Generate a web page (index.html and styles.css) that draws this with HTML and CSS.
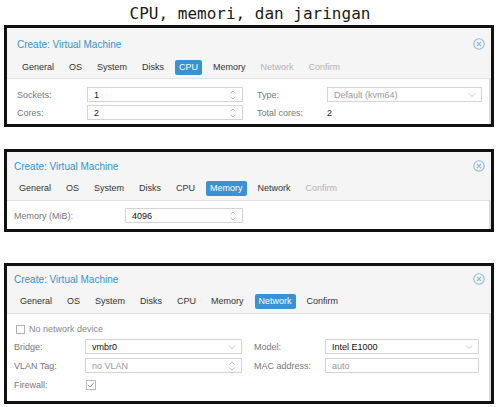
FILE: index.html
```html
<!DOCTYPE html>
<html lang="id">

<head>
    <meta charset="UTF-8">
    <meta name="viewport" content="width=device-width, initial-scale=1.0">
    <title>CPU, memori, dan jaringan</title>
    <link rel="stylesheet" href="styles.css">
</head>

<body>
    <h1 class="page-title">CPU, memori, dan jaringan</h1>

    <!-- CPU step -->
    <section class="wizard wizard-cpu">
        <header class="wizard-head">
            <div class="wizard-title-row">
                <span class="wizard-title">Create: Virtual Machine</span>
                <svg class="close-icon" viewBox="0 0 12 12" width="12" height="12">
                    <circle cx="6" cy="6" r="5.2" fill="none" stroke="#8cbbe4" stroke-width="1.1" />
                    <path d="M4 4 L8 8 M8 4 L4 8" stroke="#8cbbe4" stroke-width="1.1" />
                </svg>
            </div>
            <nav class="tabs">
                <span class="tab">General</span>
                <span class="tab">OS</span>
                <span class="tab">System</span>
                <span class="tab">Disks</span>
                <span class="tab active">CPU</span>
                <span class="tab">Memory</span>
                <span class="tab disabled">Network</span>
                <span class="tab disabled">Confirm</span>
            </nav>
        </header>
        <div class="wizard-body">
            <div class="form-grid">
                <div class="field">
                    <label>Sockets:</label>
                    <div class="input">1
                        <svg class="spin" viewBox="0 0 8 12" width="8" height="12">
                            <path d="M1.5 4.5 L4 2 L6.5 4.5 M1.5 7.5 L4 10 L6.5 7.5" fill="none" stroke="#b5b5b5" stroke-width="0.9" />
                        </svg>
                    </div>
                </div>
                <div class="field">
                    <label>Type:</label>
                    <div class="input muted">Default (kvm64)
                        <svg class="caret" viewBox="0 0 8 6" width="8" height="6">
                            <path d="M1 1.5 L4 4.5 L7 1.5" fill="none" stroke="#c0c0c0" stroke-width="0.9" />
                        </svg>
                    </div>
                </div>
                <div class="field">
                    <label>Cores:</label>
                    <div class="input">2
                        <svg class="spin" viewBox="0 0 8 12" width="8" height="12">
                            <path d="M1.5 4.5 L4 2 L6.5 4.5 M1.5 7.5 L4 10 L6.5 7.5" fill="none" stroke="#b5b5b5" stroke-width="0.9" />
                        </svg>
                    </div>
                </div>
                <div class="field">
                    <label>Total cores:</label>
                    <span class="value">2</span>
                </div>
            </div>
        </div>
    </section>

    <!-- Memory step -->
    <section class="wizard wizard-memory">
        <header class="wizard-head">
            <div class="wizard-title-row">
                <span class="wizard-title">Create: Virtual Machine</span>
                <svg class="close-icon" viewBox="0 0 12 12" width="12" height="12">
                    <circle cx="6" cy="6" r="5.2" fill="none" stroke="#8cbbe4" stroke-width="1.1" />
                    <path d="M4 4 L8 8 M8 4 L4 8" stroke="#8cbbe4" stroke-width="1.1" />
                </svg>
            </div>
            <nav class="tabs">
                <span class="tab">General</span>
                <span class="tab">OS</span>
                <span class="tab">System</span>
                <span class="tab">Disks</span>
                <span class="tab">CPU</span>
                <span class="tab active">Memory</span>
                <span class="tab">Network</span>
                <span class="tab disabled">Confirm</span>
            </nav>
        </header>
        <div class="wizard-body">
            <div class="field field-wide">
                <label>Memory (MiB):</label>
                <div class="input strong">4096
                    <svg class="spin" viewBox="0 0 8 12" width="8" height="12">
                        <path d="M1.5 4.5 L4 2 L6.5 4.5 M1.5 7.5 L4 10 L6.5 7.5" fill="none" stroke="#b5b5b5" stroke-width="0.9" />
                    </svg>
                </div>
            </div>
        </div>
    </section>

    <!-- Network step -->
    <section class="wizard wizard-network">
        <header class="wizard-head">
            <div class="wizard-title-row">
                <span class="wizard-title">Create: Virtual Machine</span>
                <svg class="close-icon" viewBox="0 0 12 12" width="12" height="12">
                    <circle cx="6" cy="6" r="5.2" fill="none" stroke="#8cbbe4" stroke-width="1.1" />
                    <path d="M4 4 L8 8 M8 4 L4 8" stroke="#8cbbe4" stroke-width="1.1" />
                </svg>
            </div>
            <nav class="tabs">
                <span class="tab">General</span>
                <span class="tab">OS</span>
                <span class="tab">System</span>
                <span class="tab">Disks</span>
                <span class="tab">CPU</span>
                <span class="tab">Memory</span>
                <span class="tab active">Network</span>
                <span class="tab">Confirm</span>
            </nav>
        </header>
        <div class="wizard-body">
            <div class="check-row">
                <span class="checkbox"></span>
                <span class="check-label">No network device</span>
            </div>
            <div class="form-grid">
                <div class="field">
                    <label>Bridge:</label>
                    <div class="input strong">vmbr0
                        <svg class="caret" viewBox="0 0 8 6" width="8" height="6">
                            <path d="M1 1.5 L4 4.5 L7 1.5" fill="none" stroke="#c0c0c0" stroke-width="0.9" />
                        </svg>
                    </div>
                </div>
                <div class="field">
                    <label>Model:</label>
                    <div class="input strong">Intel E1000
                        <svg class="caret" viewBox="0 0 8 6" width="8" height="6">
                            <path d="M1 1.5 L4 4.5 L7 1.5" fill="none" stroke="#c0c0c0" stroke-width="0.9" />
                        </svg>
                    </div>
                </div>
                <div class="field">
                    <label>VLAN Tag:</label>
                    <div class="input muted">no VLAN
                        <svg class="spin" viewBox="0 0 8 12" width="8" height="12">
                            <path d="M1.5 4.5 L4 2 L6.5 4.5 M1.5 7.5 L4 10 L6.5 7.5" fill="none" stroke="#b5b5b5" stroke-width="0.9" />
                        </svg>
                    </div>
                </div>
                <div class="field">
                    <label>MAC address:</label>
                    <div class="input muted">auto</div>
                </div>
                <div class="field">
                    <label>Firewall:</label>
                    <svg class="checked" viewBox="0 0 10 10" width="10" height="10">
                        <rect x="0.5" y="0.5" width="9" height="9" fill="#fff" stroke="#b8b8b8" />
                        <path d="M2.2 5 L4.2 7 L8 2.6" fill="none" stroke="#a0a0a0" stroke-width="1" />
                    </svg>
                </div>
            </div>
        </div>
    </section>
</body>

</html>
```

FILE: styles.css
```css
* {
    margin: 0;
    padding: 0;
    box-sizing: border-box;
}

body {
    width: 500px;
    height: 407px;
    overflow: hidden;
    background-color: #fff;
    font-family: 'Liberation Sans', Arial, sans-serif;
    font-size: 9px;
    color: #333;
}

.page-title {
    font-family: 'DejaVu Sans Mono', monospace;
    font-size: 16px;
    font-weight: normal;
    line-height: 20px;
    text-align: center;
    color: #1a1a1a;
    padding-top: 4px;
    height: 25px;
}

/* Wizard panel */
.wizard {
    margin: 0 6px 0 4px;
    border: 3px solid #111;
    background-color: #fff;
    box-shadow: inset -2px 0 0 #dcdcdc;
}

.wizard-memory {
    margin-top: 22px;
}

.wizard-network {
    margin-top: 31px;
}

.wizard-head {
    background-color: #f5f5f5;
    border-bottom: 1px solid #e2e2e2;
    padding: 9px 6px 3px 10px;
}

.wizard-title-row {
    display: flex;
    justify-content: space-between;
    align-items: center;
    height: 14px;
}

.wizard-title {
    font-size: 10px;
    color: #3892d4;
}

.tabs {
    display: flex;
    gap: 7px;
    margin-top: 9px;
    margin-left: 1px;
}

.tab {
    height: 15px;
    line-height: 15px;
    padding: 0 4px;
    color: #333;
    border-radius: 2px;
}

.tab.active {
    background-color: #3892d4;
    color: #fff;
}

.tab.disabled {
    color: #b4b4b4;
}

.wizard-body {
    padding: 8px 10px 4px 10px;
}

.form-grid {
    display: grid;
    grid-template-columns: 226px 225px;
    column-gap: 14px;
    row-gap: 3px;
}

.field {
    display: flex;
    align-items: center;
    height: 15px;
}

.field label {
    width: 70px;
    flex-shrink: 0;
    color: #777;
}

.field .value {
    color: #222;
}

.input {
    flex: 1;
    height: 15px;
    display: flex;
    align-items: center;
    justify-content: space-between;
    padding: 0 5px 0 6px;
    border: 1px solid #d4d4d4;
    color: #222;
    background-color: #fff;
}

.input.muted {
    color: #999;
}

.input.strong {
    color: #111;
}

/* Memory step */
.wizard-memory .wizard-head {
    padding: 7px 6px 4px 7px;
}

.wizard-memory .tabs {
    margin-top: 8px;
}

.wizard-memory .wizard-body {
    padding: 7px 10px 6px 7px;
}

.field-wide {
    width: 229px;
}

.field-wide label {
    width: 111px;
}

/* Network step */
.wizard-network .wizard-head {
    padding: 6px 6px 4px 7px;
}

.wizard-network .tabs {
    margin-top: 8px;
    margin-left: 2px;
}

.wizard-network .wizard-body {
    padding: 8px 10px 9px 7px;
}

.wizard-network .field label {
    width: 71px;
}

.wizard-network .form-grid {
    grid-template-columns: 228px 225px;
    column-gap: 12px;
    row-gap: 4px;
}

.check-row {
    display: flex;
    align-items: center;
    height: 14px;
    margin-bottom: 3px;
    padding-left: 2px;
}

.checkbox {
    width: 9px;
    height: 9px;
    border: 1px solid #b0b0b0;
    background-color: #fff;
    margin-right: 4px;
}

.check-label {
    color: #888;
}

.checked {
    margin-left: 1px;
}
```
